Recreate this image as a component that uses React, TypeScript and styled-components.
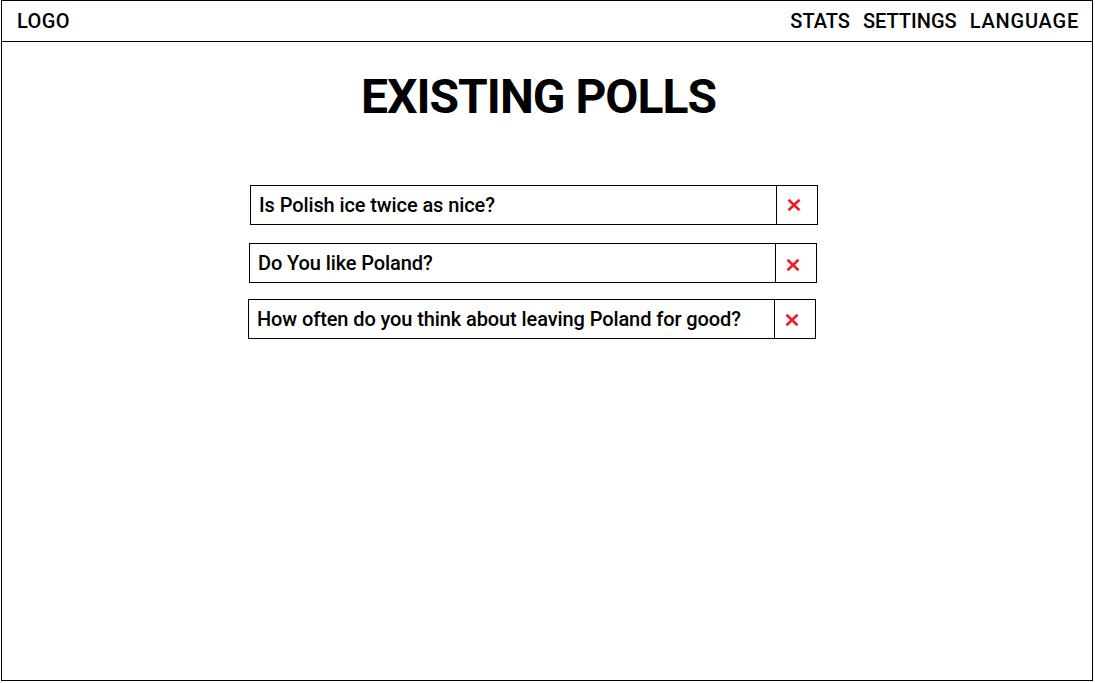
import React from "react";
import styled, { createGlobalStyle } from "styled-components";

const Global = createGlobalStyle`
  html, body { margin: 0; padding: 0; background: #fff; }
  body { font-family: Roboto, "Liberation Sans", sans-serif; color: #000; }
`;

const Frame = styled.div`
  margin-left: 1px;
  width: 1092px;
  height: 681px;
  box-sizing: border-box;
  border: 1px solid #000;
  display: flex;
  flex-direction: column;
`;

const Header = styled.header`
  height: 41px;
  box-sizing: border-box;
  border-bottom: 1px solid #000;
  display: flex;
  align-items: center;
  justify-content: space-between;
  padding: 0 13px 0 15px;
`;

const NavText = styled.span<{ $space?: number }>`
  font-size: 20px;
  font-weight: 500;
  letter-spacing: ${(p) => p.$space ?? 0.4}px;
`;

const Nav = styled.nav`
  display: flex;
  gap: 13px;
`;

const Main = styled.main`
  display: flex;
  flex-direction: column;
  align-items: center;
`;

const Title = styled.h1`
  margin: 27px 17px 0 0;
  font-size: 48px;
  line-height: 56px;
  font-weight: 700;
  letter-spacing: -1px;
`;

const List = styled.div`
  margin: 60px 30px 0 0;
  display: flex;
  flex-direction: column;
  gap: 18px;
  width: 568px;
`;

const Row = styled.div<{ $shift: number; $gap?: number }>`
  display: flex;
  flex: none;
  width: 568px;
  height: 40px;
  box-sizing: border-box;
  border: 1px solid #000;
  margin-left: ${(p) => p.$shift}px;
  margin-top: ${(p) => p.$gap ?? 0}px;
`;

const Question = styled.div`
  flex: 1;
  display: flex;
  align-items: center;
  padding-left: 8px;
  font-size: 20px;
  font-weight: 500;
  letter-spacing: -0.1px;
  border-right: 1px solid #000;
`;

const Delete = styled.button<{ $dy: number }>`
  width: 40px;
  border: none;
  background: transparent;
  padding: ${(p) => p.$dy * 2}px 6px 0 0;
  display: flex;
  align-items: center;
  justify-content: center;
  cursor: pointer;
`;

const Cross = () => (
  <svg width="16" height="14" viewBox="0 0 16 14">
    <path d="M2.5 1.8 L13.5 12.2 M13.5 1.8 L2.5 12.2" stroke="#ee1d2b" strokeWidth="2.6" strokeLinecap="butt" />
  </svg>
);

const polls = [
  { q: "Is Polish ice twice as nice?", shift: 2, gap: 0, dy: 0 },
  { q: "Do You like Poland?", shift: 1, gap: 0, dy: 2 },
  { q: "How often do you think about leaving Poland for good?", shift: 0, gap: -2, dy: 1 },
];

export default function App() {
  return (
    <>
      <Global />
      <Frame>
        <Header>
          <NavText>LOGO</NavText>
          <Nav>
            <NavText $space={0}>STATS</NavText>
            <NavText $space={0}>SETTINGS</NavText>
            <NavText $space={0.8}>LANGUAGE</NavText>
          </Nav>
        </Header>
        <Main>
          <Title>EXISTING POLLS</Title>
          <List>
            {polls.map((p) => (
              <Row key={p.q} $shift={p.shift} $gap={p.gap}>
                <Question>{p.q}</Question>
                <Delete aria-label="delete" $dy={p.dy}>
                  <Cross />
                </Delete>
              </Row>
            ))}
          </List>
        </Main>
      </Frame>
    </>
  );
}
